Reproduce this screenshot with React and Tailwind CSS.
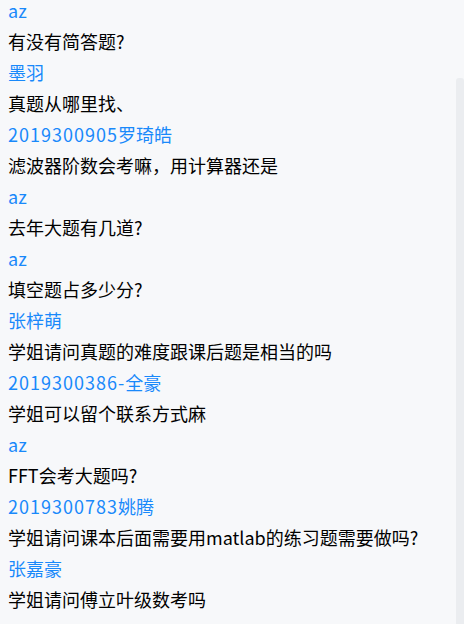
const messages = [
  { name: "az", text: "有没有简答题?" },
  { name: "墨羽", text: "真题从哪里找、" },
  { name: "2019300905罗琦皓", text: "滤波器阶数会考嘛，用计算器还是" },
  { name: "az", text: "去年大题有几道?" },
  { name: "az", text: "填空题占多少分?" },
  { name: "张梓萌", text: "学姐请问真题的难度跟课后题是相当的吗" },
  { name: "2019300386-全豪", text: "学姐可以留个联系方式麻" },
  { name: "az", text: "FFT会考大题吗?" },
  { name: "2019300783姚腾", text: "学姐请问课本后面需要用matlab的练习题需要做吗?" },
  { name: "张嘉豪", text: "学姐请问傅立叶级数考吗" },
];

// student ids render a bit wider in the original font
function Name({ name }) {
  const m = name.match(/^([0-9-]+)(.*)$/);
  if (!m) return name;
  return (
    <>
      <span className="tracking-[1px]">{m[1]}</span>
      {m[2]}
    </>
  );
}

export default function App() {
  return (
    <div
      className="relative h-[624px] w-[464px] overflow-hidden bg-[#f7f8fa] text-[18px]"
      style={{ fontFamily: '"Noto Sans CJK SC", sans-serif' }}
    >
      <div className="px-2">
        {messages.map((m, i) => (
          <div key={i} className="mb-[11px]">
            <div className="leading-[20px] text-[#1989fa]">
              <Name name={m.name} />
            </div>
            <div className="mt-[11px] leading-[20px] text-black">{m.text}</div>
          </div>
        ))}
      </div>
      <div className="absolute right-0 top-[78px] bottom-0 w-2 rounded-t-[3px] bg-[#ebedf0]" />
    </div>
  );
}
